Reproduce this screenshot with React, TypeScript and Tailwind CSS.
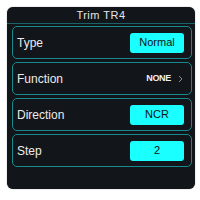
import React from "react";

function Row({ label, children }: { label: string; children: React.ReactNode }) {
  return (
    <div className="flex h-[33px] items-center justify-between rounded-[5px] border border-[#168a8d] pl-[4px] pr-[7px]">
      <span className="text-[12px] text-[#ececec]">{label}</span>
      {children}
    </div>
  );
}

function Btn({ text }: { text: string }) {
  return (
    <div className="flex h-[20px] w-[54px] items-center justify-center rounded-[3px] bg-[#1affff] text-[11px] text-[#111]">
      {text}
    </div>
  );
}

export default function App() {
  return (
    <div className="h-[200px] w-[200px] bg-white pl-[7px] pt-[7px]" style={{ fontFamily: '"Liberation Sans", Arial, sans-serif' }}>
      <div className="flex h-[182px] w-[188px] flex-col rounded-[6px] bg-[#121519] shadow-[0_0_1px_#555]">
        <div className="flex h-[17px] items-center justify-center border-b border-[#1a6366] text-[11px] tracking-[0.5px] text-[#e6e6e6]">
          Trim TR4
        </div>
        <div className="flex flex-col gap-[3px] pl-[5px] pr-[3px] pt-[2px]">
          <Row label="Type">
            <Btn text="Normal" />
          </Row>
          <Row label="Function">
            <div className="flex items-center gap-[7px]">
              <span className="text-[9px] font-bold tracking-[-0.3px] text-[#f0f0f0]">NONE</span>
              <svg width="5" height="8" viewBox="0 0 5 8" className="mr-[1px]">
                <path d="M1 1 L4 4 L1 7" fill="none" stroke="#8a8a8a" strokeWidth="1" />
              </svg>
            </div>
          </Row>
          <Row label="Direction">
            <Btn text="NCR" />
          </Row>
          <Row label="Step">
            <Btn text="2" />
          </Row>
        </div>
      </div>
    </div>
  );
}
